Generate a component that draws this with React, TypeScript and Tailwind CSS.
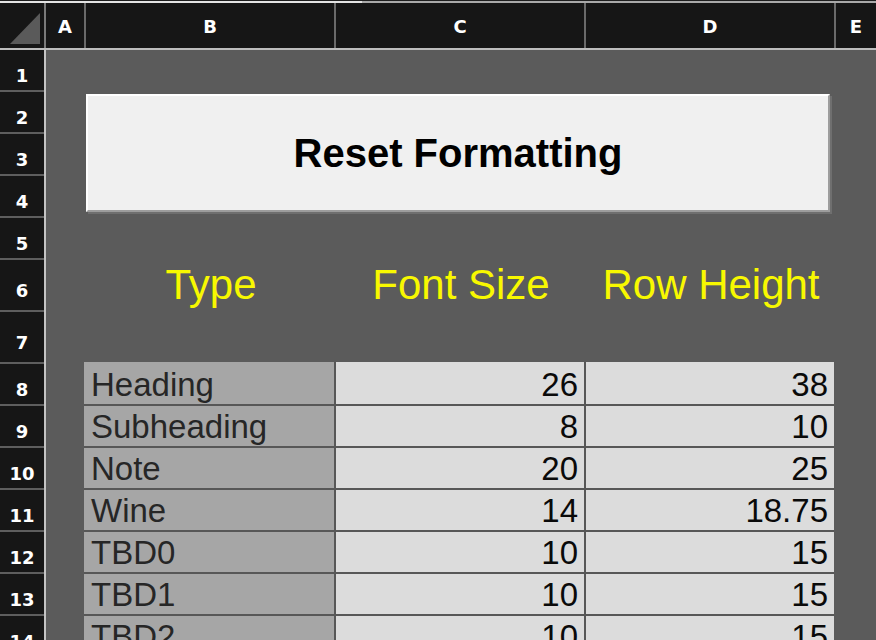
import React from "react";

const rowHeights = [42, 42, 42, 42, 42, 52, 52, 42, 42, 42, 42, 42, 42, 42];

const data = [
  ["Heading", "26", "38"],
  ["Subheading", "8", "10"],
  ["Note", "20", "25"],
  ["Wine", "14", "18.75"],
  ["TBD0", "10", "15"],
  ["TBD1", "10", "15"],
  ["TBD2", "10", "15"],
];

export default function App() {
  return (
    <div className="w-[876px] h-[640px] overflow-hidden bg-[#5b5b5b] font-['Liberation_Sans',Arial,sans-serif]">
      {/* top strip */}
      <div className="h-[3px] flex border-t border-[#1e1e1e]">
        <div className="w-[362px] bg-[#e4e4e4]" />
        <div className="flex-1 bg-[#a9a9a9]" />
      </div>

      {/* column header */}
      <div className="flex h-[47px] bg-[#161616] border-b-2 border-[#bdbdbd] text-white font-['DejaVu_Sans',sans-serif] font-bold text-[18px] leading-none">
        <div className="w-[46px] border-r-2 border-[#7a7a7a]">
          <svg width="44" height="45" viewBox="0 0 44 45">
            <polygon points="10,41 40,10 40,41" fill="#5a5a5a" />
          </svg>
        </div>
        <div className="w-[40px] border-r-2 border-[#6a6a6a] flex items-center justify-center pt-[3px]">A</div>
        <div className="w-[250px] border-r-2 border-[#6a6a6a] flex items-center justify-center pt-[3px]">B</div>
        <div className="w-[250px] border-r-2 border-[#6a6a6a] flex items-center justify-center pt-[3px]">C</div>
        <div className="w-[250px] border-r-2 border-[#6a6a6a] flex items-center justify-center pt-[3px]">D</div>
        <div className="flex-1 flex items-center justify-center pt-[3px]">E</div>
      </div>

      {/* body */}
      <div className="flex">
        {/* row headers */}
        <div className="w-[46px] shrink-0 bg-[#161616] border-r-2 border-[#c4c4c4] flex flex-col text-white font-['DejaVu_Sans',sans-serif] font-bold text-[18px] leading-none">
          {rowHeights.map((h, i) => (
            <div
              key={i}
              style={{ height: h }}
              className="shrink-0 border-b-2 border-[#5e5e5e] flex items-center justify-center pt-[12px]"
            >
              {i + 1}
            </div>
          ))}
        </div>

        {/* sheet area */}
        <div className="flex-1 flex flex-col">
          <div className="h-[44px] shrink-0" />
          <div className="ml-[40px] w-[744px] h-[118px] shrink-0 bg-[#f0f0f0] border-2 border-t-white border-l-white border-r-[#9d9d9d] border-b-[#9d9d9d] shadow-[2px_2px_0_#6f6f6f] flex items-center justify-center">
            <span className="text-[40px] leading-[40px] font-bold text-black">Reset Formatting</span>
          </div>
          <div className="h-[48px] shrink-0" />
          <div className="ml-[40px] h-[52px] shrink-0 flex text-[42px] leading-[42px] text-[#f8f800]">
            <div className="w-[250px] flex items-end justify-center pb-[6px]">Type</div>
            <div className="w-[250px] flex items-end justify-center pb-[6px]">Font Size</div>
            <div className="w-[250px] flex items-end justify-center pb-[6px]">Row Height</div>
          </div>
          <div className="h-[50px] shrink-0" />
          <div className="ml-[38px] flex flex-col text-[33px] leading-[33px]">
            {data.map((r, i) => (
              <div key={i} className={`flex shrink-0 ${i === 0 ? "h-[44px]" : "h-[42px]"}`}>
                <div className="w-[252px] bg-[#a6a6a6] border-r-2 border-b-2 border-[#575757] flex items-end pl-[7px] pb-[3px] text-[#262626]">
                  {r[0]}
                </div>
                <div className="w-[250px] bg-[#dcdcdc] border-r-2 border-b-2 border-[#575757] flex items-end justify-end pr-[6px] pb-[3px] text-[#0a0a0a]">
                  {r[1]}
                </div>
                <div className="w-[248px] bg-[#dcdcdc] border-b-2 border-[#575757] flex items-end justify-end pr-[6px] pb-[3px] text-[#0a0a0a]">
                  {r[2]}
                </div>
              </div>
            ))}
          </div>
        </div>
      </div>
    </div>
  );
}
